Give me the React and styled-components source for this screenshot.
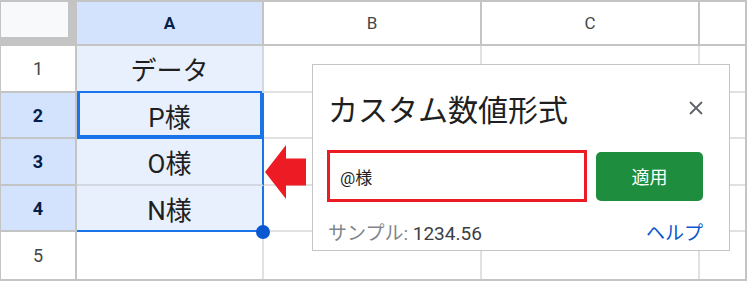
import React from 'react'
import styled, { createGlobalStyle } from 'styled-components'

const GlobalStyle = createGlobalStyle`
  body {
    margin: 0;
    background: #fff;
    font-family: Roboto, "Noto Sans CJK JP", sans-serif;
  }
`;

const HEAD_LINE = '#c4c4c4';
const GRID_LINE = '#e1e1e1';
const SEL_LINE = '#d2d8e2';
const BLUE = '#1a73e8';

const Sheet = styled.div`
  position: relative;
  width: 747px;
  box-sizing: border-box;
  border-style: solid;
  border-color: ${HEAD_LINE};
  border-width: 2px 2px 2px 1px;
  display: grid;
  grid-template-columns: 76px 187px 218px 218px 1fr;
  grid-template-rows: 44px 47px 46px 47px 46px 47px;
`;

const Corner = styled.div`
  box-sizing: border-box;
  background: #f8f9fa;
  border-right: 9px solid ${HEAD_LINE};
  border-bottom: 9px solid ${HEAD_LINE};
`;

const ColHead = styled.div`
  box-sizing: border-box;
  display: flex;
  align-items: center;
  justify-content: center;
  font-size: 17px;
  font-weight: ${p => (p.sel ? 700 : 400)};
  color: ${p => (p.sel ? '#041e49' : '#444746')};
  background: ${p => (p.sel ? '#d3e3fd' : '#fff')};
  border-right: ${p => (p.last ? 'none' : `2px solid ${HEAD_LINE}`)};
  border-bottom: 2px solid ${HEAD_LINE};
`;

const RowHead = styled.div`
  box-sizing: border-box;
  display: flex;
  align-items: center;
  justify-content: center;
  font-size: 18px;
  font-weight: ${p => (p.sel ? 700 : 400)};
  color: ${p => (p.sel ? '#041e49' : '#444746')};
  background: ${p => (p.sel ? '#d3e3fd' : '#fff')};
  border-right: 2px solid ${HEAD_LINE};
  border-bottom: ${p => (p.last ? 'none' : `2px solid ${HEAD_LINE}`)};
`;

const Cell = styled.div`
  position: relative;
  box-sizing: border-box;
  display: flex;
  align-items: center;
  justify-content: center;
  font-size: 26px;
  color: #1f1f1f;
  background: ${p => (p.sel ? '#e8f0fe' : '#fff')};
  border-right: ${p =>
    p.lastCol ? 'none' : `2px solid ${p.edge ? BLUE : p.sel ? SEL_LINE : GRID_LINE}`};
  border-bottom: ${p =>
    p.lastRow ? 'none' : `2px solid ${p.floor ? BLUE : p.sel ? SEL_LINE : GRID_LINE}`};

  ${p =>
    p.active &&
    `
    &::after {
      content: '';
      position: absolute;
      top: -2px; left: 0; right: 0; bottom: 0;
      border: 2px solid ${BLUE};
      border-left-width: 3px;
    }
  `}

  ${p =>
    p.handle &&
    `
    &::after {
      content: '';
      position: absolute;
      z-index: 2;
      right: -8px;
      bottom: -9px;
      width: 14px;
      height: 14px;
      border-radius: 50%;
      background: #0b57d0;
    }
  `}
`;

const Arrow = styled.svg`
  position: absolute;
  left: 264px;
  top: 143px;
`;

const Dialog = styled.div`
  position: absolute;
  z-index: 3;
  left: 311px;
  top: 62px;
  width: 418px;
  height: 187px;
  box-sizing: border-box;
  background: #fff;
  border: 1px solid #c4c4c4;
  padding: 0 26px 0 14px;
  display: flex;
  flex-direction: column;
`;

const DialogHead = styled.div`
  height: 85px;
  display: flex;
  align-items: center;
  justify-content: space-between;
  padding-left: 1px;
`;

const Title = styled.div`
  font-size: 30px;
  color: #1f1f1f;
`;

const Close = styled.svg`
  margin-right: -1px;
`;

const InputRow = styled.div`
  height: 52px;
  display: flex;
  align-items: center;
  gap: 9px;
`;

const Field = styled.div`
  box-sizing: border-box;
  width: 260px;
  height: 52px;
  border: 3px solid #ed1c24;
  padding-left: 10px;
  display: flex;
  align-items: center;
  font-size: 17px;
  color: #1f1f1f;
`;

const Apply = styled.button`
  width: 107px;
  height: 49px;
  border: none;
  border-radius: 5px;
  background: #1e8e3e;
  color: #fff;
  font-family: inherit;
  font-size: 18px;
  padding: 0;
`;

const Footer = styled.div`
  height: 48px;
  box-sizing: border-box;
  padding-top: 20px;
  display: flex;
  justify-content: space-between;
  line-height: 24px;
  font-size: 19px;
`;

const Sample = styled.div`
  color: #80868b;
  padding-left: 1px;
`;

const SampleValue = styled.span`
  color: #3c4043;
`;

const Help = styled.div`
  color: #0b57d0;
`;

const cols = ['A', 'B', 'C', ''];
const values = ['データ', 'P様', 'O様', 'N様', ''];

const App = () => (
  <>
    <GlobalStyle />
    <Sheet>
      <Corner />
      {cols.map((c, i) => (
        <ColHead key={i} sel={i === 0} last={i === 3}>
          {c}
        </ColHead>
      ))}
      {values.map((v, r) => (
        <React.Fragment key={r}>
          <RowHead sel={r >= 1 && r <= 3} last={r === 4}>
            {r + 1}
          </RowHead>
          <Cell
            sel={r <= 3}
            active={r === 1}
            handle={r === 3}
            edge={r >= 1 && r <= 3}
            floor={r === 1 || r === 3}
            lastRow={r === 4}
          >
            {v}
          </Cell>
          <Cell lastRow={r === 4} />
          <Cell lastRow={r === 4} />
          <Cell lastRow={r === 4} lastCol />
        </React.Fragment>
      ))}

      <Arrow width="41" height="54" viewBox="0 0 41 54">
        <polygon points="0,27 21,0 21,13.5 41,13.5 41,40.5 21,40.5 21,54" fill="#ed1c24" />
      </Arrow>

      <Dialog>
        <DialogHead>
          <Title>カスタム数値形式</Title>
          <Close width="16" height="16" viewBox="0 0 16 16">
            <path d="M2 2L14 14M14 2L2 14" stroke="#5f6368" strokeWidth="1.8" />
          </Close>
        </DialogHead>
        <InputRow>
          <Field>@様</Field>
          <Apply>適用</Apply>
        </InputRow>
        <Footer>
          <Sample>
            サンプル: <SampleValue>1234.56</SampleValue>
          </Sample>
          <Help>ヘルプ</Help>
        </Footer>
      </Dialog>
    </Sheet>
  </>
);

export default App;
